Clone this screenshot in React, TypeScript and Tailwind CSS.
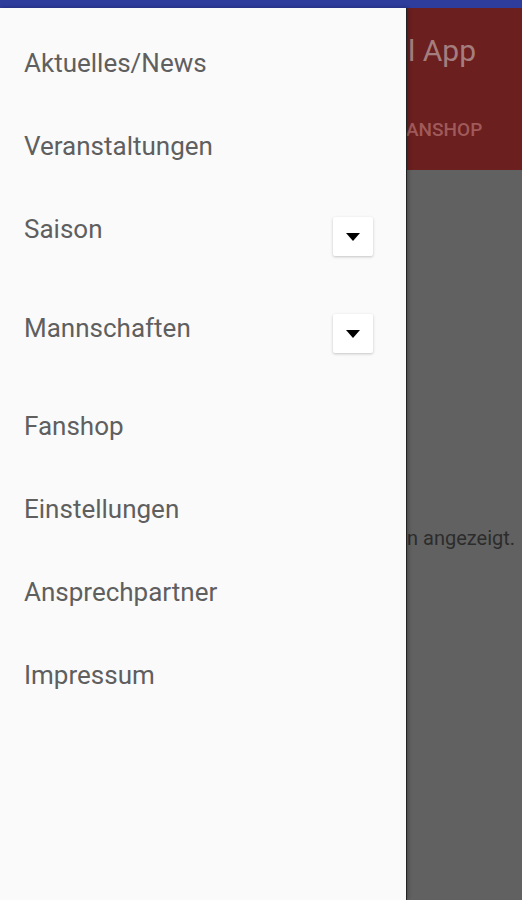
type MenuItem = {
  label: string;
  rowClass: string;
  buttonClass?: string;
};

const menu: MenuItem[] = [
  { label: 'Aktuelles/News', rowClass: 'h-[83px]' },
  { label: 'Veranstaltungen', rowClass: 'h-[83px]' },
  { label: 'Saison', rowClass: 'h-[99px]', buttonClass: 'mt-[30px]' },
  { label: 'Mannschaften', rowClass: 'h-[98px]', buttonClass: 'mt-[28px]' },
  { label: 'Fanshop', rowClass: 'h-[83px]' },
  { label: 'Einstellungen', rowClass: 'h-[83px]' },
  { label: 'Ansprechpartner', rowClass: 'h-[83px]' },
  { label: 'Impressum', rowClass: 'h-[83px]' },
];

const DropButton = () => (
  <div className="w-10 h-[39px] bg-white rounded-[2px] shadow-[0_1px_3px_rgba(0,0,0,0.22)] flex items-center justify-center">
    <svg width="14" height="8" viewBox="0 0 14 8" className="mt-[1px]">
      <path d="M0 0h14L7 8z" fill="#000" />
    </svg>
  </div>
);

export default function App() {
  return (
    <div className="w-[522px] h-[900px] flex flex-col overflow-hidden" style={{ fontFamily: 'Roboto, "Noto Sans", sans-serif' }}>
      {/* status bar */}
      <div className="h-2 bg-[#2e3c9c] shrink-0" />

      <div className="flex flex-1 min-h-0">
        {/* drawer */}
        <div className="w-[407px] shrink-0 bg-[#fafafa] border-r border-[#222] shadow-[1px_0_4px_rgba(0,0,0,0.3)] z-10 flex flex-col pt-[13px]">
          {menu.map((item) => (
            <div key={item.label} className={`${item.rowClass} flex items-start justify-between pl-6 pr-[33px]`}>
              <div className="h-[83px] flex items-center">
                <span className="text-[26px] leading-8 text-[#5f5f5f]">{item.label}</span>
              </div>
              {item.buttonClass && (
                <div className={item.buttonClass}>
                  <DropButton />
                </div>
              )}
            </div>
          ))}
        </div>

        {/* dimmed app behind the drawer, only its right edge shows */}
        <div className="flex-1 min-w-0 overflow-hidden flex flex-col bg-[#616161]">
          <div className="h-[162px] bg-[#6b1f1f] flex flex-col">
            <div className="h-[86px] flex items-center pl-[1px] whitespace-nowrap">
              <span className="text-[30px] leading-10 text-[#a47e7e]">l App</span>
            </div>
            <div className="h-[72px] flex items-center whitespace-nowrap">
              <span className="text-[19px] font-medium text-[#a05a5a] -ml-[1px]">ANSHOP</span>
            </div>
          </div>
          <div className="flex-1 pt-[354px] whitespace-nowrap">
            <span className="text-[20px] text-[#2c2c2c] leading-7">n angezeigt.</span>
          </div>
        </div>
      </div>
    </div>
  );
}
